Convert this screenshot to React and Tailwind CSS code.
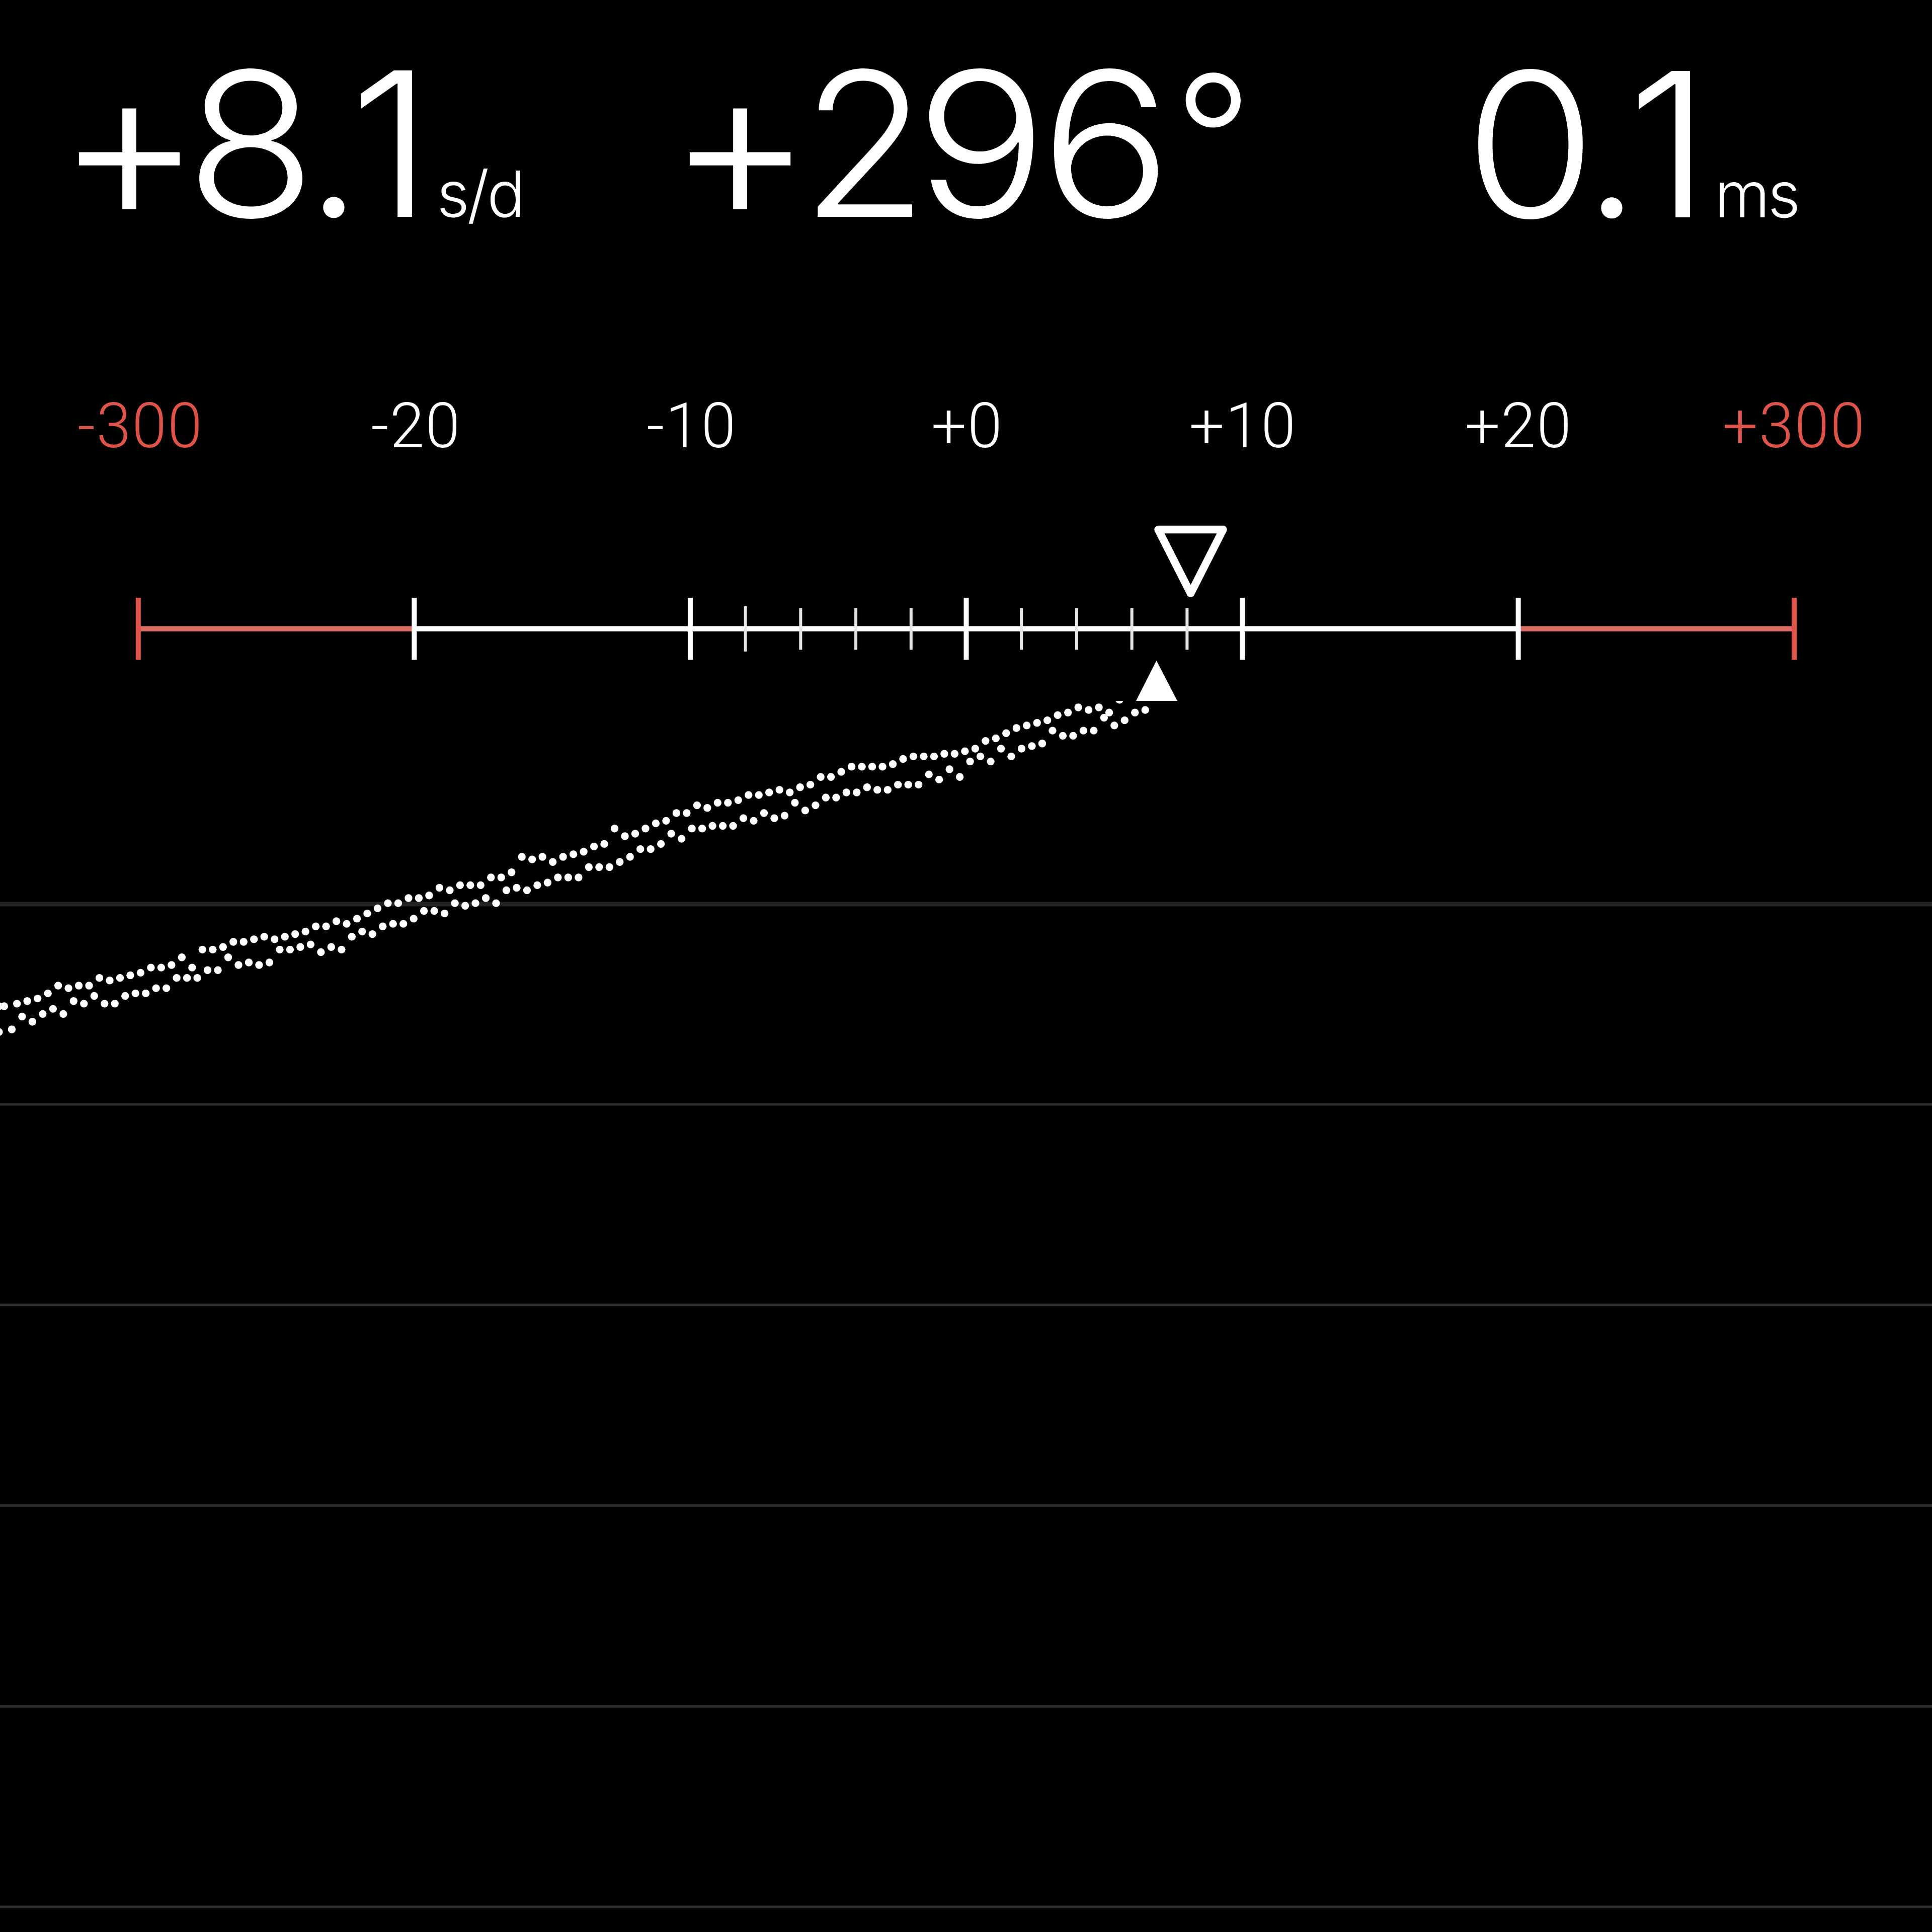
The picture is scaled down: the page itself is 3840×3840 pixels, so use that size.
const UNIT = 5.12;
const CHART_TOP = 1393;

const TIC = [
  389, 388, 387, 385, 382, 383, 382, 382, 379, 380,
  379, 378, 377, 375, 375, 374, 371, 375, 368, 368,
  367, 365, 365, 364, 363, 364, 363, 362, 361, 359,
  359, 357, 358, 356, 354, 352, 350, 350, 348, 348,
  347, 344, 345, 343, 343, 343, 340, 340, 338, 332,
  333, 332, 334, 332, 331, 330, 328, 327, 321, 324,
  323, 321, 319, 318, 315, 315, 312, 313, 311, 311,
  310, 308, 308, 307, 306, 307, 305, 304, 301, 301,
  299, 297, 297, 297, 297, 296, 294, 293, 293, 293,
  292, 292, 291, 290, 287, 286, 284, 282, 281, 280,
  279, 277, 276, 274, 275, 274, 276, 271,
];

const TOC = [
  399, 394, 396, 393, 391, 393, 388, 389, 386, 389,
  389, 386, 385, 385, 383, 383, 379, 379, 379, 376,
  376, 371, 374, 373, 374, 373, 368, 368, 367, 366,
  369, 367, 368, 363, 361, 362, 359, 358, 358, 356,
  353, 353, 354, 350, 351, 350, 348, 350, 345, 344,
  345, 343, 342, 340, 340, 340, 336, 336, 336, 334,
  332, 329, 329, 327, 323, 325, 321, 321, 320, 320,
  320, 317, 318, 315, 317, 316, 311, 314, 312, 309,
  309, 307, 307, 305, 306, 306, 304, 304, 304, 300,
  302, 298, 301, 295, 293, 295, 290, 293, 290, 289,
  288, 283, 285, 285, 283, 283, 278, 281, 279, 276,
  275,
];

const dots = [
  { x: -0.4, y: 390 },
  { x: 1.63, y: 390 },
  { x: -0.4, y: 400 },
  ...TIC.map((y, i) => ({ x: 6.58 + i * 4, y })),
  ...TOC.map((y, i) => ({ x: 4.58 + i * 4, y })),
].map(({ x, y }) => ({ cx: x * UNIT, cy: (y + 0.62) * UNIT - CHART_TOP }));

const LABELS = ["-300", "-20", "-10", "+0", "+10", "+20", "+300"];
const STEP = 3840 / 7;
const MINOR = [-4, -3, -2, -1, 1, 2, 3, 4];

function Glyph({ className, children }) {
  return <span className={`flex origin-left justify-start tracking-[-40px] ${className}`}>{children}</span>;
}

function Unit({ children }) {
  return <span className="text-[126px] tracking-[-4.5px]">{children}</span>;
}

function Readouts() {
  return (
    <header className="flex h-[720px] items-start pt-[44px] font-['Inter'] text-[400px] leading-[484px] font-[285] whitespace-nowrap">
      <div className="-mt-[16px] flex w-[1215px] items-baseline pl-[112px]">
        <Glyph className="w-[257px] translate-y-[11px] text-[444px]">+</Glyph>
        <Glyph className="w-[238px] scale-x-[1.06]">8</Glyph>
        <Glyph className="w-[87px]">.</Glyph>
        <Glyph className="w-[174px] scale-x-[1.05]">1</Glyph>
        <Unit>s/d</Unit>
      </div>
      <div className="-mt-[16px] flex w-[1570px] items-baseline pl-[111px]">
        <Glyph className="w-[266px] translate-y-[11px] text-[444px]">+</Glyph>
        <Glyph className="w-[227px] scale-x-[1.03]">2</Glyph>
        <Glyph className="w-[248px] scale-x-[1.09]">9</Glyph>
        <Glyph className="w-[266px] scale-x-[1.09]">6</Glyph>
        <Glyph className="w-[155px] -translate-y-[34px] text-[344px]">°</Glyph>
      </div>
      <div className="flex items-baseline pl-[126px]">
        <Glyph className="w-[236px] scale-x-[1.06]">0</Glyph>
        <Glyph className="w-[87px]">.</Glyph>
        <Glyph className="w-[174px] scale-x-[1.05]">1</Glyph>
        <Unit>ms</Unit>
      </div>
    </header>
  );
}

function ScaleLabels() {
  return (
    <div className="grid h-[290px] grid-cols-7 pt-[54px] pl-[5px] text-center font-['Roboto'] text-[124px] leading-[145px] font-[320] tracking-[2px] text-white">
      {LABELS.map((label, i) => (
        <span key={label} className={i === 0 || i === 6 ? "text-[#de544a]" : ""}>
          {label}
        </span>
      ))}
    </div>
  );
}

function Gauge() {
  const left = STEP / 2;
  const right = 3840 - STEP / 2;
  return (
    <svg className="block h-[383px] w-[3840px]" viewBox="0 1010 3840 383">
      <rect x={left} y="1244.5" width={STEP} height="10.5" fill="#db6a62" />
      <rect x={right - STEP} y="1244.5" width={STEP} height="10.5" fill="#db6a62" />
      <rect x={left + STEP} y="1244.5" width={STEP * 4} height="10.5" fill="#fff" />
      {LABELS.map((label, i) => (
        <rect
          key={label}
          x={left + i * STEP - 4.5}
          y="1188"
          width="10"
          height="123.5"
          fill={i === 0 || i === 6 ? "#de544a" : "#fff"}
        />
      ))}
      {MINOR.map((n) => (
        <rect
          key={n}
          x={1920 + (n * STEP) / 5 - 2.5}
          y={n === -4 ? 1205 : 1208.5}
          width="6"
          height={n === -4 ? 90 : 83}
          fill="#e6e6e6"
        />
      ))}
      <path
        d="M2302 1052.5H2431L2366.5 1179.5Z"
        fill="none"
        stroke="#fff"
        strokeWidth="15.4"
        strokeLinejoin="round"
      />
      <path d="M2298.5 1313L2340 1393H2258Z" fill="#fff" />
    </svg>
  );
}

function Trace() {
  return (
    <svg className="block h-[2447px] w-[3840px]" viewBox="0 0 3840 2447">
      <rect x="0" y={1792.5 - CHART_TOP} width="3840" height="9" fill="#232323" />
      {[2195, 2593.5, 2992.5, 3391.5, 3790].map((y) => (
        <rect key={y} x="0" y={y - 2.5 - CHART_TOP} width="3840" height="5" fill="#2e2e2e" />
      ))}
      {dots.map((d, i) => (
        <circle key={i} cx={d.cx} cy={d.cy} r="7.7" fill="#fff" />
      ))}
    </svg>
  );
}

export default function App() {
  return (
    <main className="h-[3840px] w-[3840px] overflow-hidden bg-black text-white">
      <Readouts />
      <ScaleLabels />
      <Gauge />
      <Trace />
    </main>
  );
}
